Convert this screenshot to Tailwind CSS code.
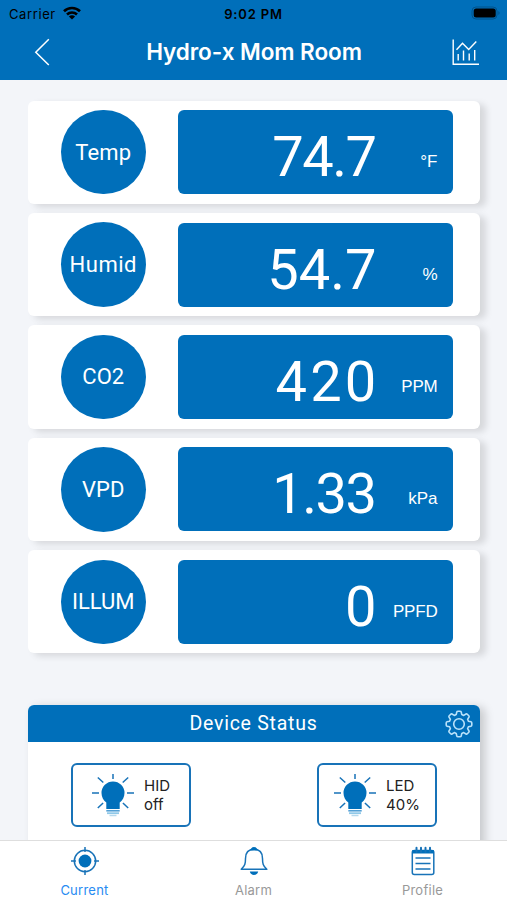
<!DOCTYPE html>
<html lang="en">

<head>
  <meta charset="UTF-8">
  <meta name="viewport" content="width=device-width, initial-scale=1.0">
  <title>Hydro-x Mom Room</title>
  <script src="https://cdn.jsdelivr.net/npm/@tailwindcss/browser@4"></script>
</head>

<body class="bg-[#f3f5f9] font-['Roboto',sans-serif]">
  <div class="flex flex-col w-[507px] h-[900px] overflow-hidden">
    <!-- top bar -->
    <header class="shrink-0 h-[79.5px] bg-[#006fba]">
      <div class="grid grid-cols-3 items-center h-7 pl-[9px] pr-[9px] font-['Inter',sans-serif] text-[13px] leading-7 text-black">
        <div class="flex items-center gap-[7px]">
          <span class="tracking-[0.6px]">Carrier</span>
          <svg class="w-[18px] h-[14px] -mt-[2px]" viewBox="0 0 18 14" fill="none" stroke="#000" stroke-width="2.6">
            <path d="M1 5.2C5.4 .9 12.6 .9 17 5.2" />
            <path d="M4 8.5C6.8 5.8 11.2 5.8 14 8.5" />
            <path d="M9 13.6L5.9 10.4C7.6 8.8 10.4 8.8 12.1 10.4Z" fill="#000" stroke="none" />
          </svg>
        </div>
        <div class="text-center font-semibold tracking-[0.85px]">9:02 PM</div>
        <svg class="justify-self-end -mr-[3px] -mt-[2px] w-[30px] h-[14px]" viewBox="0 0 30 14">
          <rect x="1" y="1" width="25" height="12" rx="4" fill="none" stroke="#003f6c" stroke-opacity=".6" />
          <rect x="2.7" y="2.5" width="22" height="9" rx="2.5" />
          <path d="M27.5 5v4q2-2 0-4z" fill="#003f6c" fill-opacity=".7" />
        </svg>
      </div>
      <div class="flex items-center justify-between h-12 pl-[33px] pr-[27px]">
        <svg class="w-[18px] h-7" viewBox="0 0 18 28" fill="none" stroke="#fff" stroke-width="1.5">
          <path d="M15.8 1.3L2.8 14.2L15.8 27" />
        </svg>
        <h1 class="pl-[5px] font-['Inter',sans-serif] text-[22.5px] font-semibold text-white tracking-[-0.07px]">Hydro-x Mom Room</h1>
        <svg class="w-7 h-7" viewBox="0 0 28 28" fill="none" stroke="#fff" stroke-width="1.4">
          <path d="M1.2 1.5V26.2H27" />
          <path d="M4.5 11.7L10.5 5.2L16.7 11.5L24.3 3.5" />
          <path d="M6.2 16v6.5M11.5 12.5v10M17.2 15.5v7M22.7 12v10.5" />
        </svg>
      </div>
    </header>

    <main class="flex-1 min-h-0 overflow-hidden pl-7 pr-[27px] pt-[21px]">
      <section class="flex flex-col gap-[9px] text-white">
        <div class="flex items-center h-[103.4px] rounded-md bg-white pl-[33px] shadow-[6px_3px_7px_#0000001f]">
          <div class="flex items-center justify-center size-[84.5px] rounded-full bg-[#006fba] text-[22px] tracking-[0.2px]">Temp</div>
          <div class="flex items-baseline justify-end ml-8 w-[275px] h-[84px] rounded-md bg-[#006fba] pr-[15px] pt-[15px]">
            <span class="text-[56px] font-[450] leading-[64px] tracking-[-1.5px]">74.7</span>
            <span class="w-[62px] -translate-y-[9px] text-right font-['Liberation_Sans',sans-serif] text-[17px]">°F</span>
          </div>
        </div>
        <div class="flex items-center h-[103.4px] rounded-md bg-white pl-[33px] shadow-[6px_3px_7px_#0000001f]">
          <div class="flex items-center justify-center size-[84.5px] rounded-full bg-[#006fba] text-[22px] tracking-[0.5px]">Humid</div>
          <div class="flex items-baseline justify-end ml-8 w-[275px] h-[84px] rounded-md bg-[#006fba] pr-[15px] pt-[15px]">
            <span class="text-[56px] font-[450] leading-[64px]">54.7</span>
            <span class="w-[61px] -translate-y-[9px] text-right font-['Liberation_Sans',sans-serif] text-[17px]">%</span>
          </div>
        </div>
        <div class="flex items-center h-[103.4px] rounded-md bg-white pl-[33px] shadow-[6px_3px_7px_#0000001f]">
          <div class="flex items-center justify-center size-[84.5px] rounded-full bg-[#006fba] text-[22px]">CO2</div>
          <div class="flex items-baseline justify-end ml-8 w-[275px] h-[84px] rounded-md bg-[#006fba] pr-[15px] pt-[15px]">
            <span class="text-[56px] font-[450] leading-[64px] tracking-[3.2px]">420</span>
            <span class="w-[58px] -translate-y-[9px] text-right font-['Liberation_Sans',sans-serif] text-[17px] tracking-[-0.2px]">PPM</span>
          </div>
        </div>
        <div class="flex items-center h-[103.4px] rounded-md bg-white pl-[33px] shadow-[6px_3px_7px_#0000001f]">
          <div class="flex items-center justify-center size-[84.5px] rounded-full bg-[#006fba] text-[22px]">VPD</div>
          <div class="flex items-baseline justify-end ml-8 w-[275px] h-[84px] rounded-md bg-[#006fba] pr-[15px] pt-[15px]">
            <span class="text-[56px] font-[450] leading-[64px] tracking-[-1.5px]">1.33</span>
            <span class="w-[62px] -translate-y-[9px] text-right font-['Liberation_Sans',sans-serif] text-[17px]">kPa</span>
          </div>
        </div>
        <div class="flex items-center h-[103.4px] rounded-md bg-white pl-[33px] shadow-[6px_3px_7px_#0000001f]">
          <div class="flex items-center justify-center size-[84.5px] rounded-full bg-[#006fba] text-[22px]">ILLUM</div>
          <div class="flex items-baseline justify-end ml-8 w-[275px] h-[84px] rounded-md bg-[#006fba] pr-[15px] pt-[15px]">
            <span class="text-[56px] font-[450] leading-[64px]">0</span>
            <span class="w-[61px] -translate-y-[9px] text-right font-['Liberation_Sans',sans-serif] text-[17px] tracking-[-0.2px]">PPFD</span>
          </div>
        </div>
      </section>

      <!-- device status -->
      <section class="mt-[51.5px] h-60 rounded-md bg-white shadow-[5px_2px_10px_#0000002e]">
        <div class="grid grid-cols-[1fr_auto_1fr] items-center h-[37.5px] rounded-t-md bg-[#006fba] pr-[7px] text-white">
          <h2 class="col-start-2 pl-[6px] text-[19.5px] tracking-[0.75px]">Device Status</h2>
          <svg class="justify-self-end w-7 h-7" viewBox="0 0 28 28" fill="none" stroke="#b9e2fa" stroke-width="1.6" stroke-linejoin="round">
            <path d="M11.2 4.6L11.8 2Q12 1.2 13 1.2H15Q16 1.2 16.2 2L16.8 4.6L18.7 5.4L21 4Q21.7 3.6 22.3 4.2L23.8 5.7Q24.4 6.3 24 7L22.6 9.3L23.4 11.2L26 11.8Q26.8 12 26.8 13V15Q26.8 16 26 16.2L23.4 16.8L22.6 18.7L24 21Q24.4 21.7 23.8 22.3L22.3 23.8Q21.7 24.4 21 24L18.7 22.6L16.8 23.4L16.2 26Q16 26.8 15 26.8H13Q12 26.8 11.8 26L11.2 23.4L9.3 22.6L7 24Q6.3 24.4 5.7 23.8L4.2 22.3Q3.6 21.7 4 21L5.4 18.7L4.6 16.8L2 16.2Q1.2 16 1.2 15V13Q1.2 12 2 11.8L4.6 11.2L5.4 9.3L4 7Q3.6 6.3 4.2 5.7L5.7 4.2Q6.3 3.6 7 4L9.3 5.4Z" />
            <circle cx="14" cy="14" r="5.3" />
          </svg>
        </div>
        <div class="flex justify-between pt-[21px] pl-[43px] pr-[43px] font-['Inter',sans-serif] text-[15px] leading-[19px] text-[#222]">
          <div class="flex items-center w-[120px] h-16 rounded-md border-2 border-[#1873b8] pl-[18px]">
            <svg class="w-11 h-11 shrink-0" viewBox="0 0 44 44">
              <path d="M22 1v5M6.8 4.5l5.5 5M37.2 4.5l-5.5 5M1 20h7M36 20h7M6.8 35l5.3-5M37.2 35l-5.3-5" fill="none" stroke="#1873b8" stroke-width="1.5" />
              <path d="M15.3 36V29.5C12.4 27.3 10.5 24 10.5 20a11.5 11.5 0 0 1 23 0C33.5 24 31.6 27.3 28.7 29.5V36Z" fill="#006fba" />
              <path d="M15.3 37.8H28.7" stroke="#4a9bd3" stroke-width="1.5" />
              <path d="M16 40.2H28" stroke="#8fc8e8" stroke-width="1.8" />
              <path d="M18.5 42.5H25.5" stroke="#b5d9ed" stroke-width="1.5" />
            </svg>
            <div class="pl-[9px]">HID<br>off</div>
          </div>
          <div class="flex items-center w-[120px] h-16 rounded-md border-2 border-[#1873b8] pl-[14px]">
            <svg class="w-11 h-11 shrink-0" viewBox="0 0 44 44">
              <path d="M22 1v5M6.8 4.5l5.5 5M37.2 4.5l-5.5 5M1 20h7M36 20h7M6.8 35l5.3-5M37.2 35l-5.3-5" fill="none" stroke="#1873b8" stroke-width="1.5" />
              <path d="M15.3 36V29.5C12.4 27.3 10.5 24 10.5 20a11.5 11.5 0 0 1 23 0C33.5 24 31.6 27.3 28.7 29.5V36Z" fill="#006fba" />
              <path d="M15.3 37.8H28.7" stroke="#4a9bd3" stroke-width="1.5" />
              <path d="M16 40.2H28" stroke="#8fc8e8" stroke-width="1.8" />
              <path d="M18.5 42.5H25.5" stroke="#b5d9ed" stroke-width="1.5" />
            </svg>
            <div class="pl-[9px]">LED<br>40%</div>
          </div>
        </div>
      </section>
    </main>

    <!-- tabs -->
    <nav class="grid grid-cols-3 shrink-0 h-[60px] border-t border-[#dedede] bg-white text-[#999] font-['Inter',sans-serif] text-[13px] tracking-[0.25px]">
      <a class="flex flex-col items-center pt-[5px] text-[#278bf2]">
        <svg class="w-[30px] h-[30px]" viewBox="0 0 30 30" fill="none" stroke="#1873b8" stroke-width="1.5">
          <circle cx="15" cy="15" r="10.7" />
          <circle cx="15" cy="15" r="6.4" fill="#006fba" stroke="none" />
          <path d="M15 1v5M15 24v5M1 15h5M24 15h5" />
        </svg>
        <span class="mt-[5px]">Current</span>
      </a>
      <a class="flex flex-col items-center pt-[5px]">
        <svg class="w-[30px] h-[30px]" viewBox="0 0 30 30" fill="none" stroke="#1873b8" stroke-width="1.5" stroke-linejoin="round">
          <path d="M2.2 23.2C6 20 6.5 17.5 6.5 12.5C6.5 6.5 9.5 3.2 15 3.2S23.5 6.5 23.5 12.5C23.5 17.5 24 20 27.8 23.2Z" />
          <path d="M10.5 4.5C12 3 12.5 1 15 1S18 3 19.5 4.5Z" fill="#006fba" stroke="none" />
          <path d="M10.8 25.5H19.2C18.5 30 11.5 30 10.8 25.5Z" fill="#006fba" stroke="none" />
        </svg>
        <span class="mt-[5px]">Alarm</span>
      </a>
      <a class="flex flex-col items-center pt-[5px]">
        <svg class="w-[30px] h-[30px]" viewBox="0 0 30 30" fill="none" stroke="#1873b8" stroke-width="1.5">
          <rect x="4.3" y="4.5" width="21.5" height="24" rx="2" />
          <path d="M4.3 4H25.8V7.5H4.3Z" fill="#006fba" stroke="none" />
          <path d="M8.5 1.7v4M13 1.7v4M17.5 1.7v4M22 1.7v4" stroke-width="2" stroke-linecap="round" />
          <path d="M7.5 12H22.5M7.5 17.5H22.5M7.5 23H22.5" />
        </svg>
        <span class="mt-[5px]">Profile</span>
      </a>
    </nav>
  </div>
</body>

</html>
